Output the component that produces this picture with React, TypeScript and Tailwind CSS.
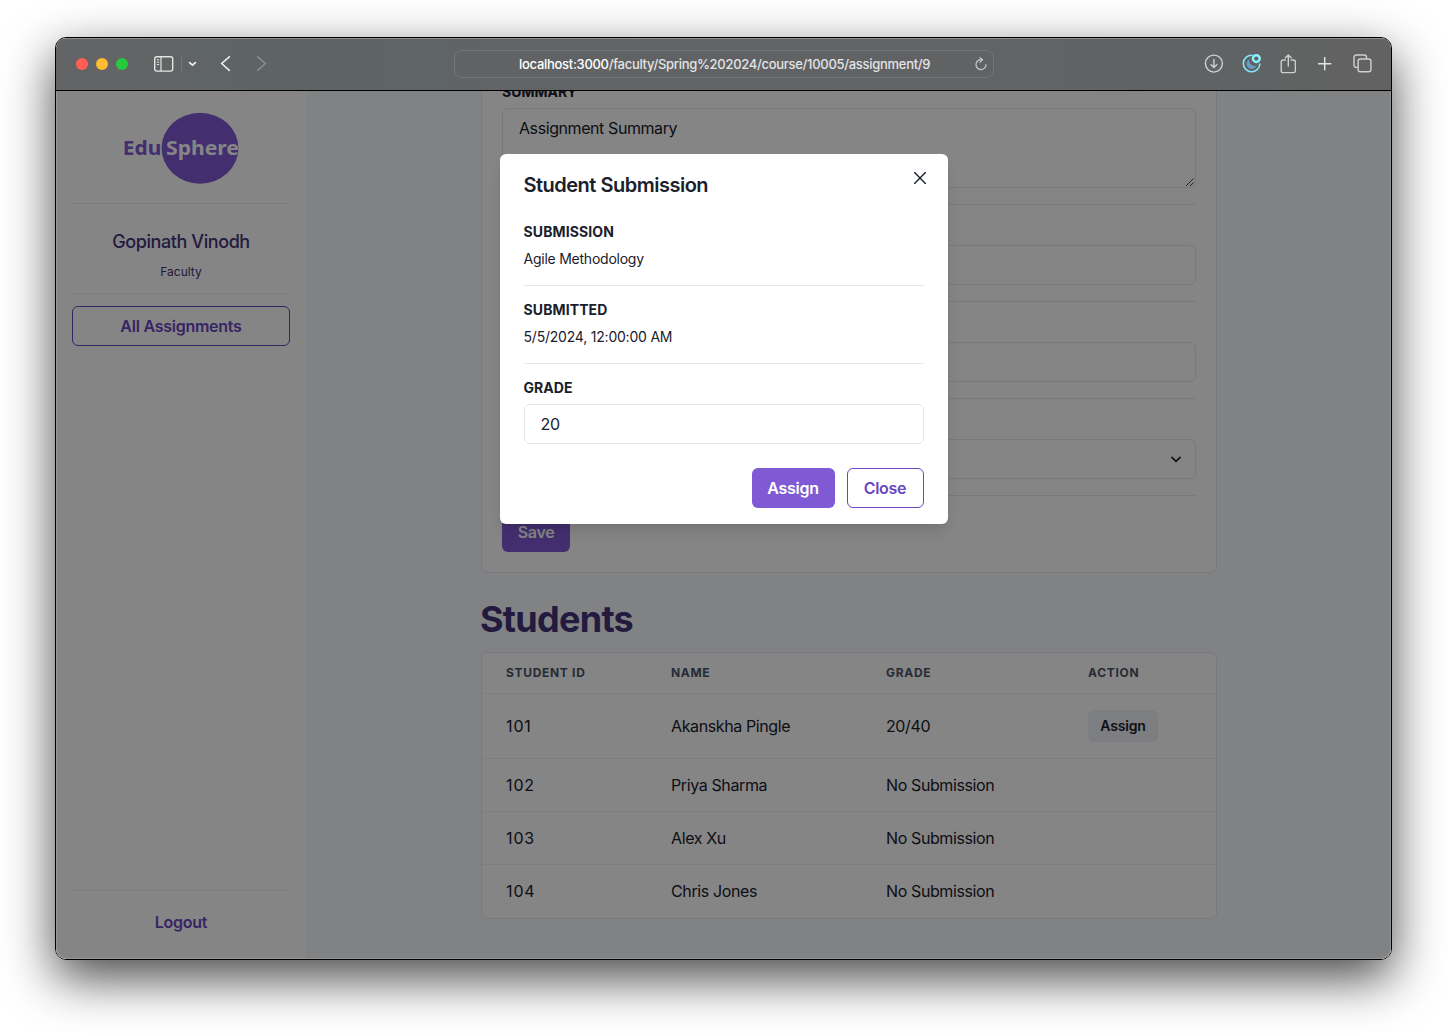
import type { ReactNode } from "react";

const students = [
  { id: "101", name: "Akanskha Pingle", grade: "20/40", submitted: true },
  { id: "102", name: "Priya Sharma", grade: "No Submission", submitted: false },
  { id: "103", name: "Alex Xu", grade: "No Submission", submitted: false },
  { id: "104", name: "Chris Jones", grade: "No Submission", submitted: false },
];

function TitleBar() {
  return (
    <div className="flex h-[53px] shrink-0 items-center border-b border-black bg-[linear-gradient(90deg,#636465_0%,#626465_5%,#5e6464_15%,#5f6464_28%,#626365_34%,#636466_60%,#5f6364_88%,#626262_97%,#636363_100%)] pl-5 shadow-[inset_0_1px_0_#8b8d8e]">
      <div className="flex gap-2">
        <span className="size-3 rounded-full bg-[#ff5f57]" />
        <span className="size-3 rounded-full bg-[#febc2e]" />
        <span className="size-3 rounded-full bg-[#28c840]" />
      </div>
      <svg className="ml-[26px] h-4 w-5" viewBox="0 0 20 16" fill="none" stroke="#e4e5e5" strokeWidth="1.4">
        <rect x="0.7" y="0.7" width="18" height="14.4" rx="2" />
        <path d="M7 1v14" strokeWidth="1.2" />
        <path d="M2.8 3.8h2.4M2.8 6.2h2.4M2.8 8.6h2.4" strokeWidth="1" />
      </svg>
      <span className="ml-[7px] h-[18px] w-px bg-[#737576]" />
      <svg className="ml-[6px] h-2 w-[9px]" viewBox="0 0 9 8" fill="none" stroke="#f0f0f0" strokeWidth="1.7" strokeLinecap="round" strokeLinejoin="round">
        <path d="M1.6 2.6 4.5 5.2 7.4 2.6" />
      </svg>
      <svg className="ml-[23px] h-4 w-[11px]" viewBox="0 0 11 16" fill="none" stroke="#f0f0f0" strokeWidth="1.6" strokeLinecap="round" strokeLinejoin="round">
        <path d="M9.3 .8 1.600 7.500l7.700 6.800" />
      </svg>
      <svg className="ml-[25px] h-4 w-[11px]" viewBox="0 0 11 16" fill="none" stroke="#8b8d8e" strokeWidth="1.6" strokeLinecap="round" strokeLinejoin="round">
        <path d="M1.700 .8 9.400 7.500l-7.700 6.800" />
      </svg>
      <div className="ml-[187px] flex h-7 w-[540px] items-center rounded-[8px] border border-[#747577] bg-[#616264]">
        <p className="ml-16 w-[411px] whitespace-nowrap text-[13px] leading-5 font-medium tracking-[-0.0225em] text-[#e3e4e4]">
          <span className="text-white">localhost:3000</span>/faculty/Spring%202024/course/10005/assignment/9
        </p>
        <svg className="ml-[45px] h-[15px] w-3" viewBox="0 0 12 15" fill="none" stroke="#c6c7c8" strokeWidth="1.2" strokeLinecap="round" strokeLinejoin="round">
          <path d="M6.4 2.600A5 5 0 1 0 11 7.600M4.9 .6l2.6 2.200L4.9 5.200" />
        </svg>
      </div>
      <svg className="ml-[210px] size-5" viewBox="0 0 20 20" fill="none" stroke="#cfd0d0" strokeWidth="1.4" strokeLinecap="round" strokeLinejoin="round">
        <circle cx="9.9" cy="9.600" r="8.500" />
        <path d="M9.9 5.4v8M7 10.700l2.9 2.900 2.900-2.900" />
      </svg>
      <svg className="ml-[18px] size-5" viewBox="0 0 20 20" fill="none">
        <path d="M10 1.200A8.300 8.300 0 1 0 17.900 10" stroke="#82e6fb" strokeWidth="1.6" strokeLinecap="round" />
        <path d="M7.7 5.3a5 5 0 1 0 6.5 6.4A5 5 0 0 1 7.7 5.3Z" fill="#6b9cc4" />
        <circle cx="14.3" cy="4.6" r="3.4" fill="#5f6364" stroke="#8af1ff" strokeWidth="2.4" />
      </svg>
      <svg className="ml-[18px] h-[21px] w-4" viewBox="0 0 16 21" fill="none" stroke="#cfd0d0" strokeWidth="1.4" strokeLinecap="round" strokeLinejoin="round">
        <path d="M5.4 6H3.1A1.9 1.9 0 0 0 1.200 7.900v8.800a1.900 1.900 0 0 0 1.900 1.900h10.400a1.900 1.900 0 0 0 1.900-1.900V7.900A1.900 1.900 0 0 0 13.500 6H11.200M8.300 12V1M5.400 3.800l2.900-2.900L11.200 3.800" />
      </svg>
      <svg className="ml-[22px] size-[14px]" viewBox="0 0 14 14" fill="none" stroke="#e2e3e3" strokeWidth="1.5" strokeLinecap="round">
        <path d="M6.700.6v12.200M.6 6.700h12.200" />
      </svg>
      <svg className="ml-[21px] h-5 w-[19px]" viewBox="0 0 19 20" fill="none" stroke="#cfd0d0" strokeWidth="1.400" strokeLinejoin="round">
        <rect x="5.100" y="5" width="12.800" height="12.800" rx="2.200" />
        <path d="M5.100 13.400H3.200A2.200 2.200 0 0 1 1 11.200V3.200A2.200 2.200 0 0 1 3.200 1h8.100a2.200 2.200 0 0 1 2.200 2.200V5" />
      </svg>
    </div>
  );
}

function Sidebar() {
  return (
    <aside className="flex w-[250px] shrink-0 flex-col bg-white px-4 text-center">
      <svg className="mx-auto mt-[17px] h-20 w-[120px]" viewBox="0 0 120 80">
        <ellipse cx="79" cy="40.200" rx="38.400" ry="35.500" fill="#805ad5" />
        <g fontFamily="Noto Sans, sans-serif" fontSize="20" fontWeight="700">
          <text x="1.800" y="46.500" fill="#805ad5" textLength="38.500" lengthAdjust="spacingAndGlyphs">Edu</text>
          <text x="45" y="46.500" fill="#ffffff" textLength="73" lengthAdjust="spacingAndGlyphs">Sphere</text>
        </g>
      </svg>
      <div className="mt-[15px] h-px bg-[#edeff2]" />
      <p className="mt-6 text-[18px] leading-7 font-medium tracking-[-0.023em] text-[#44337a]">Gopinath Vinodh</p>
      <p className="mt-2 text-xs leading-4 text-[#44337a]">Faculty</p>
      <div className="mt-[13px] h-px bg-[#edeff2]" />
      <button className="mt-3 h-10 rounded-md border border-[#6b46c1] text-base font-semibold tracking-[-0.016em] text-[#6b46c1]">
        All Assignments
      </button>
      <div className="mt-auto h-px bg-[#edeff2]" />
      <p className="mt-[19px] mb-[25px] text-base leading-6 font-semibold tracking-[-0.016em] text-[#6b46c1]">Logout</p>
    </aside>
  );
}

function Field({ label, children }: { label?: string; children: ReactNode }) {
  return (
    <div className="mb-4 border-b border-[#e2e8f0] pb-4">
      <h3 className="mb-2 h-4 text-sm leading-4 font-bold">{label}</h3>
      {children}
    </div>
  );
}

function AssignmentForm() {
  return (
    <section className="-mt-[28px] h-[510px] shrink-0 rounded-md border border-[#e2e8f0] bg-white p-5">
      <Field label="SUMMARY">
        <div className="flex h-20 justify-between rounded-md border border-[#e2e8f0] pt-[7px] pl-4">
          <span className="text-base leading-6 tracking-[-0.026em]">Assignment Summary</span>
          <svg className="mr-[1px] mb-[1px] size-2 self-end" viewBox="0 0 8 8" stroke="#1a1a1a" strokeWidth="0.800">
            <path d="M0 8 7.500.5M4 8l3.500-3.500" />
          </svg>
        </div>
      </Field>
      <Field>
        <div className="h-10 rounded-md border border-[#e2e8f0]" />
      </Field>
      <Field>
        <div className="h-10 rounded-md border border-[#e2e8f0]" />
      </Field>
      <Field>
        <div className="flex h-10 items-center justify-end rounded-md border border-[#e2e8f0] pr-[13px]">
          <svg className="size-3" viewBox="0 0 12 12" fill="none" stroke="#1a202c" strokeWidth="1.600">
            <path d="M1.400 3.900 6 8.400l4.600-4.500" />
          </svg>
        </div>
      </Field>
      <button className="h-10 w-[68px] rounded-md bg-[#805ad5] text-base font-semibold tracking-[-0.02em] text-white">Save</button>
    </section>
  );
}

function StudentsTable() {
  return (
    <section className="mt-[11px] shrink-0 overflow-hidden rounded-md border border-[#e2e8f0] bg-white">
      <div className="grid h-[41px] grid-cols-[165px_215px_202px_1fr] items-center border-b border-[#edf2f7] pl-6 text-xs font-bold tracking-[0.057em] text-[#4a5568]">
        <span>STUDENT ID</span>
        <span>NAME</span>
        <span>GRADE</span>
        <span>ACTION</span>
      </div>
      {students.map((s) => (
        <div
          key={s.id}
          className={`grid grid-cols-[165px_215px_202px_1fr] items-center border-b border-[#edf2f7] pl-6 text-base tracking-[-0.024em] last:border-transparent ${s.submitted ? "h-[65px]" : "h-[53px]"}`}
        >
          <span className="tracking-[0.055em]">{s.id}</span>
          <span>{s.name}</span>
          <span>{s.grade}</span>
          <span>
            {s.submitted && (
              <button className="h-8 w-[70px] rounded-md bg-[#edf2f7] text-sm font-semibold tracking-[-0.01em]">Assign</button>
            )}
          </span>
        </div>
      ))}
    </section>
  );
}

function SubmissionDialog() {
  return (
    <div className="absolute inset-0 flex items-start justify-center bg-black/48 pt-[63px]">
      <div className="relative h-[370px] w-[448px] rounded-md bg-white px-6 pt-4 shadow-[0_10px_15px_-3px_rgba(0,0,0,0.1),0_4px_6px_-2px_rgba(0,0,0,0.05)]">
        <button className="absolute top-2 right-3 flex size-8 items-center justify-center">
          <svg className="size-3" viewBox="0 0 12 12" stroke="#1a202c" strokeWidth="1.400" strokeLinecap="round">
            <path d="m.6.6 10.800 10.800M11.400.6.6 11.400" />
          </svg>
        </button>
        <h2 className="text-xl leading-[30px] font-semibold tracking-[-0.025em]">Student Submission</h2>
        <h3 className="mt-6 text-sm leading-4 font-bold tracking-[0.008em]">SUBMISSION</h3>
        <p className="mt-2 text-sm leading-[21px] tracking-[-0.017em]">Agile Methodology</p>
        <div className="mt-4 mb-4 h-px bg-[#e2e8f0]" />
        <h3 className="text-sm leading-4 font-bold tracking-[0.008em]">SUBMITTED</h3>
        <p className="mt-2 text-sm leading-[21px] tracking-[-0.015em]">5/5/2024, 12:00:00 AM</p>
        <div className="mt-4 mb-4 h-px bg-[#e2e8f0]" />
        <h3 className="text-sm leading-4 font-bold tracking-[0.005em]">GRADE</h3>
        <div className="mt-2 flex h-10 items-center rounded-md border border-[#e2e8f0] px-4 text-base tracking-[-0.02em]">20</div>
        <div className="mt-6 flex justify-end gap-3 text-base font-semibold tracking-[-0.017em]">
          <button className="h-10 w-[83px] rounded-md bg-[#805ad5] text-white">Assign</button>
          <button className="h-10 w-[77px] rounded-md border border-[#6b46c1] text-[#6b46c1]">Close</button>
        </div>
      </div>
    </div>
  );
}

export default function App() {
  return (
    <div className="flex h-[1033px] w-[1447px] items-start overflow-hidden bg-white pt-[37px] pl-[55px] font-['Inter',sans-serif] text-[#1a202c]">
      <div className="flex h-[923px] w-[1337px] shrink-0 flex-col overflow-hidden rounded-[11px] border border-black shadow-[0_18px_50px_rgba(0,0,0,0.72)]">
        <TitleBar />
        <div className="relative flex min-h-0 flex-1 overflow-hidden">
          <Sidebar />
          <main className="flex min-w-0 flex-1 flex-col overflow-hidden bg-[#f7fafc] pr-[174px] pl-[175px]">
            <AssignmentForm />
            <h1 className="mt-[25px] -ml-px text-4xl leading-[43px] font-bold tracking-[-0.02em] text-[#44337a]">Students</h1>
            <StudentsTable />
          </main>
          <SubmissionDialog />
          <div className="pointer-events-none absolute inset-0 rounded-b-[10px] border border-t-0 border-white/15" />
        </div>
      </div>
    </div>
  );
}
